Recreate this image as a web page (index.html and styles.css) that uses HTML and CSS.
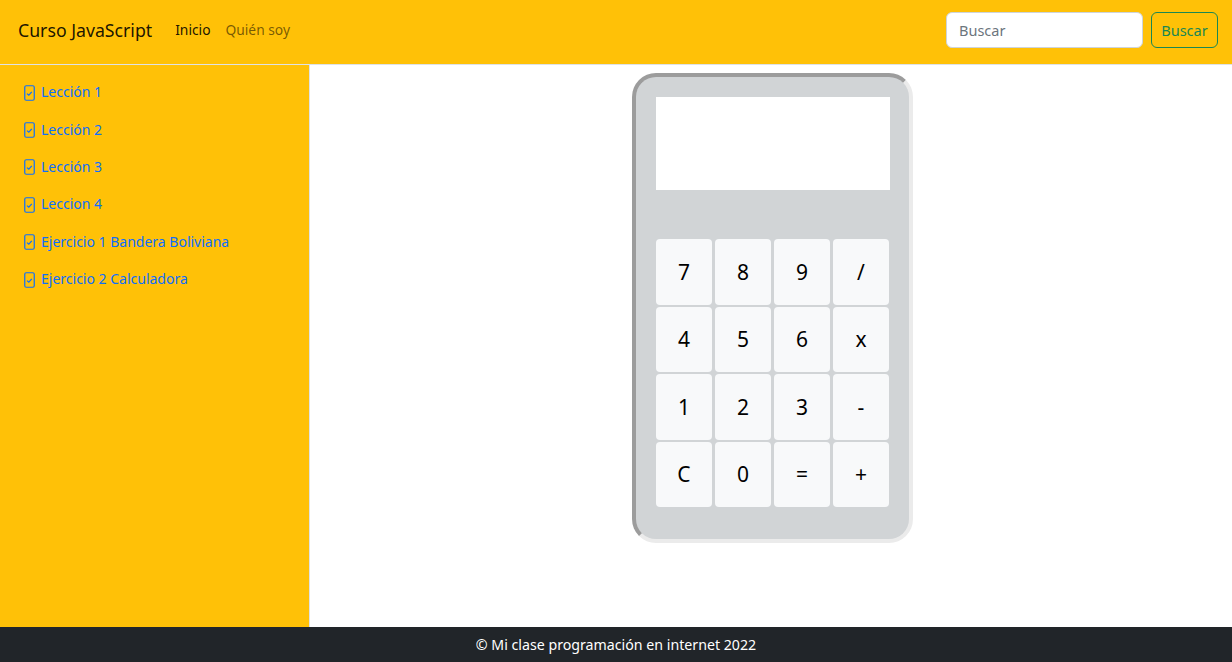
FILE: index.html
```html
<!DOCTYPE html>
<html lang="es">
<head>
<meta charset="utf-8">
<title>Curso JavaScript</title>
<link rel="stylesheet" href="styles.css">
</head>
<body>
<header class="navbar">
  <a class="brand" href="#">Curso JavaScript</a>
  <nav class="nav">
    <a class="nav-link active" href="#">Inicio</a>
    <a class="nav-link" href="#">Quién soy</a>
  </nav>
  <form class="search">
    <input class="search-input" type="text" placeholder="Buscar">
    <button class="search-btn" type="button">Buscar</button>
  </form>
</header>
<div class="layout">
  <aside class="sidebar">
    <ul class="menu">
      <li><a href="#"><svg class="ico" viewBox="0 0 11 16"><rect x="0.75" y="0.75" width="9.5" height="14.5" rx="1.5"/><path d="M3 8.6l1.8 1.6 3-3.4"/></svg>Lección 1</a></li>
      <li><a href="#"><svg class="ico" viewBox="0 0 11 16"><rect x="0.75" y="0.75" width="9.5" height="14.5" rx="1.5"/><path d="M3 8.6l1.8 1.6 3-3.4"/></svg>Lección 2</a></li>
      <li><a href="#"><svg class="ico" viewBox="0 0 11 16"><rect x="0.75" y="0.75" width="9.5" height="14.5" rx="1.5"/><path d="M3 8.6l1.8 1.6 3-3.4"/></svg>Lección 3</a></li>
      <li><a href="#"><svg class="ico" viewBox="0 0 11 16"><rect x="0.75" y="0.75" width="9.5" height="14.5" rx="1.5"/><path d="M3 8.6l1.8 1.6 3-3.4"/></svg>Leccion 4</a></li>
      <li><a href="#"><svg class="ico" viewBox="0 0 11 16"><rect x="0.75" y="0.75" width="9.5" height="14.5" rx="1.5"/><path d="M3 8.6l1.8 1.6 3-3.4"/></svg>Ejercicio 1 Bandera Boliviana</a></li>
      <li><a href="#"><svg class="ico" viewBox="0 0 11 16"><rect x="0.75" y="0.75" width="9.5" height="14.5" rx="1.5"/><path d="M3 8.6l1.8 1.6 3-3.4"/></svg>Ejercicio 2 Calculadora</a></li>
    </ul>
  </aside>
  <main class="main">
    <div class="calc">
      <div class="screen"></div>
      <div class="keys">
        <button class="key">7</button>
        <button class="key">8</button>
        <button class="key">9</button>
        <button class="key">/</button>
        <button class="key">4</button>
        <button class="key">5</button>
        <button class="key">6</button>
        <button class="key">x</button>
        <button class="key">1</button>
        <button class="key">2</button>
        <button class="key">3</button>
        <button class="key">-</button>
        <button class="key">C</button>
        <button class="key">0</button>
        <button class="key">=</button>
        <button class="key">+</button>
      </div>
    </div>
  </main>
</div>
<footer class="footer">© Mi clase programación en internet 2022</footer>
</body>
</html>
```
FILE: styles.css
```css
* { box-sizing: border-box; }
html, body { height: 100%; }
body {
  margin: 0;
  font-family: "Noto Sans", "Open Sans", sans-serif;
  font-size: 16px;
  color: #212529;
  display: flex;
  flex-direction: column;
  background: #fff;
}
a { text-decoration: none; }

.navbar {
  height: 65px;
  flex: none;
  background: #ffc107;
  border-bottom: 1px solid #dee2e6;
  display: flex;
  align-items: center;
  padding: 0 14px 5px 18px;
}
.brand {
  font-size: 17.7px;
  color: rgba(0,0,0,.9);
  margin-right: 23px;
}
.nav { display: flex; gap: 15px; }
.nav-link { font-size: 13.8px; color: rgba(0,0,0,.55); }
.nav-link.active { color: rgba(0,0,0,.9); }
.search { margin-left: auto; display: flex; gap: 8px; }
.search-input {
  width: 197px;
  height: 36px;
  border: 1px solid #ced4da;
  border-radius: 6px;
  padding: 0 12px;
  font: inherit;
  font-size: 14.5px;
  background: #fff;
}
.search-input::placeholder { color: #6c757d; }
.search-btn {
  height: 36px;
  width: 67px;
  border: 1px solid #198754;
  border-radius: 6px;
  background: transparent;
  color: #198754;
  font: inherit;
  font-size: 14.5px;
  padding: 0;
}

.layout { flex: 1; display: flex; min-height: 0; }
.sidebar {
  width: 310px;
  flex: none;
  background: #ffc107;
  border-right: 1px solid #dee2e6;
  padding-top: 8px;
}
.menu { list-style: none; margin: 0; padding: 0 0 0 24px; }
.menu li { height: 37.4px; display: flex; align-items: center; }
.menu a {
  color: #0d6efd;
  font-size: 14px;
  display: flex;
  align-items: center;
}
.ico {
  width: 11px;
  height: 16px;
  margin-right: 6px;
  margin-top: 2px;
  fill: none;
  stroke: #0d6efd;
  stroke-width: 1.2;
}

.main { flex: 1; display: flex; justify-content: center; align-items: flex-start; padding-top: 8px; }
.calc {
  width: 281px;
  height: 470px;
  margin-left: 3px;
  background: #d1d4d6;
  border: 4px solid;
  border-color: #9c9c9c #ebebeb #ebebeb #9c9c9c;
  border-radius: 24px;
  padding: 20px 19px 0 20px;
}
.screen { height: 93px; background: #fff; }
.keys {
  margin-top: 49px;
  display: grid;
  grid-template-columns: repeat(4, 56px);
  grid-auto-rows: 65.5px;
  column-gap: 3px;
  row-gap: 2px;
}
.key {
  border: none;
  border-radius: 4px;
  background: #f8f9fa;
  font-family: "Noto Sans", "Open Sans", sans-serif;
  font-size: 21px;
  color: #000;
  padding: 0;
}

.footer {
  height: 35px;
  flex: none;
  background: #212529;
  color: #fff;
  display: flex;
  align-items: center;
  justify-content: center;
  font-size: 14.2px;
}
```
